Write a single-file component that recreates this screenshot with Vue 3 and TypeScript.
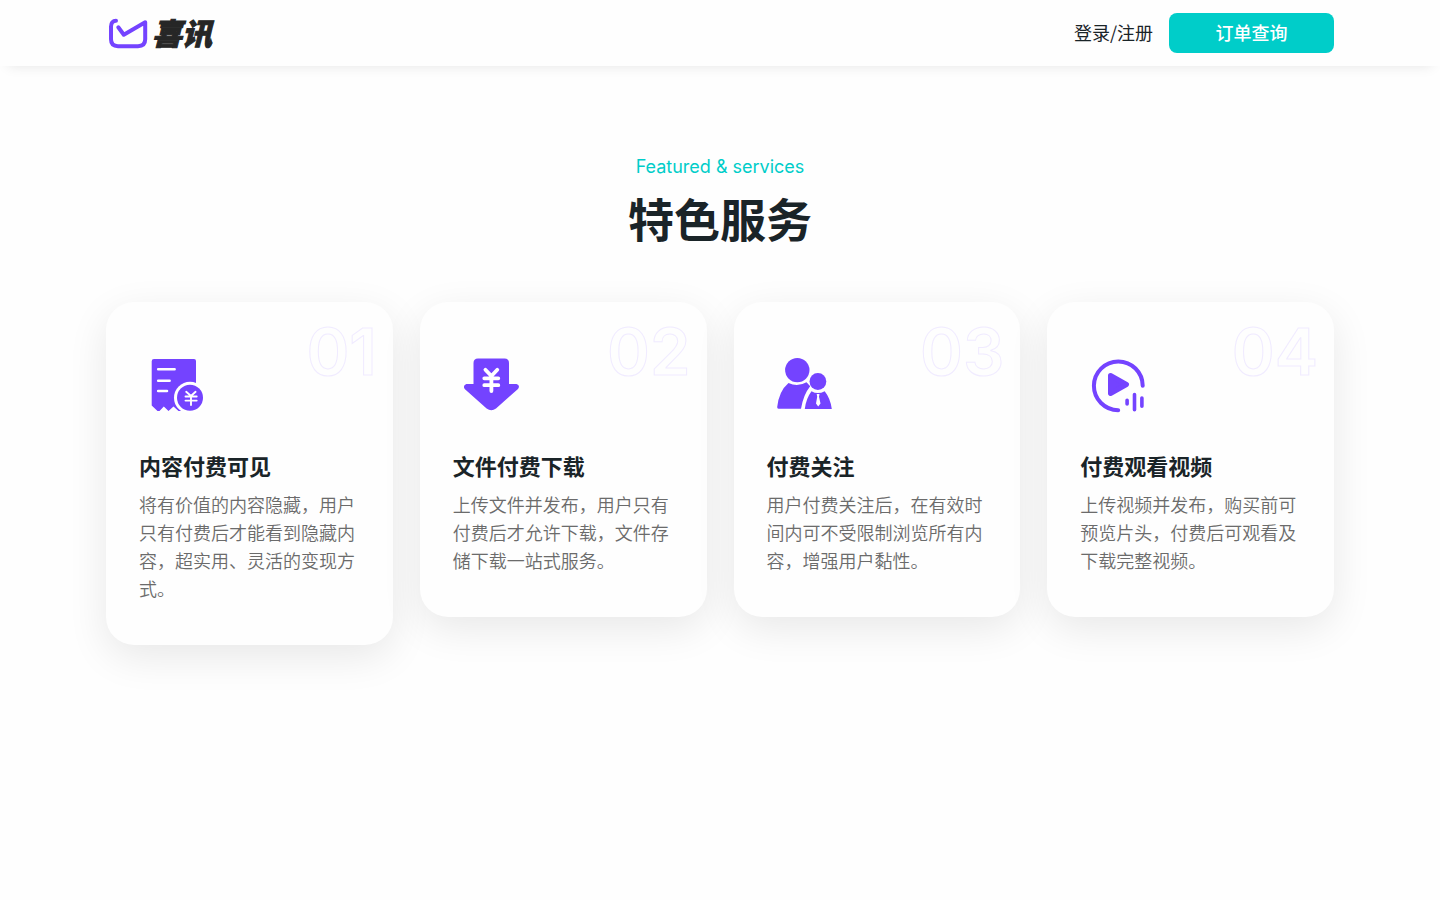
<script setup lang="ts">
interface Service {
  no: string
  icon: 'receipt' | 'download' | 'people' | 'video'
  viewBox: string
  title: string
  text: string
}

const services: Service[] = [
  {
    no: '01',
    icon: 'receipt',
    viewBox: '-1 0 80 80',
    title: '内容付费可见',
    text: '将有价值的内容隐藏，用户只有付费后才能看到隐藏内容，超实用、灵活的变现方式。',
  },
  {
    no: '02',
    icon: 'download',
    viewBox: '3 0 80 80',
    title: '文件付费下载',
    text: '上传文件并发布，用户只有付费后才允许下载，文件存储下载一站式服务。',
  },
  {
    no: '03',
    icon: 'people',
    viewBox: '2 0 80 80',
    title: '付费关注',
    text: '用户付费关注后，在有效时间内可不受限制浏览所有内容，增强用户黏性。',
  },
  {
    no: '04',
    icon: 'video',
    viewBox: '0 0 80 80',
    title: '付费观看视频',
    text: '上传视频并发布，购买前可预览片头，付费后可观看及下载完整视频。',
  },
]
</script>

<template>
  <div class="page">
    <header class="header">
      <a class="logo" href="#">
        <svg class="logo-mark" viewBox="0 0 42 32" aria-hidden="true">
          <path
            d="M10 3.700C6.800 3.700 5 6 5 9.500V22.300Q5 29.200 12 29.200H32Q39.200 29.200 39.200 22.300V5.300L17.800 17.700L12.300 10.300"
            fill="none"
            stroke="#7443ff"
            stroke-width="4"
            stroke-linecap="round"
            stroke-linejoin="round"
          />
        </svg>
        <span class="logo-text">喜讯</span>
      </a>
      <nav class="nav">
        <a class="login" href="#">登录/注册</a>
        <button class="order" type="button">订单查询</button>
      </nav>
    </header>

    <main class="main">
      <p class="eyebrow">Featured &amp; services</p>
      <h1 class="heading">特色服务</h1>

      <div class="cards">
        <article v-for="s in services" :key="s.no" class="card">
          <span class="number">{{ s.no }}</span>
          <svg class="icon" :viewBox="s.viewBox" aria-hidden="true">
            <template v-if="s.icon === 'receipt'">
              <path
                d="M14 14H54Q56 14 56 16V60L51 66H38.500L33.500 61.500L28.500 66L23.800 61.500L19.500 66H17.500L11.700 60.500V16.300Q11.700 14 14 14Z"
                fill="#7443ff"
              />
              <path
                d="M18.200 24.300H34.600M18.200 35.700H29.600M18.200 46H27"
                stroke="#fff"
                stroke-width="2.600"
                stroke-linecap="round"
              />
              <circle cx="50" cy="52.700" r="16" fill="#fff" />
              <circle cx="50" cy="52.700" r="13" fill="#7443ff" />
              <path
                d="M46.200 46.800L51 51L55.600 46.800M51 51V60M45.500 51.500H56.700M45.500 55.600H56.700"
                fill="none"
                stroke="#fff"
                stroke-width="1.900"
                stroke-linecap="round"
              />
            </template>
            <template v-else-if="s.icon === 'download'">
              <path
                d="M28 13.500H54.500Q59 13.500 59 18V39H66.500Q70.500 40.500 68 44L46 63.500Q41.300 67 36.600 63.500L14.700 44Q12.500 40.500 16.300 39H23.500V18Q23.500 13.500 28 13.500Z"
                fill="#7443ff"
              />
              <path
                d="M35.400 24.800L41.400 31L47.300 24.800M41.400 31V46M34.300 33.300H48.300M34.300 40.200H48.300"
                fill="none"
                stroke="#fff"
                stroke-width="3.800"
                stroke-linecap="round"
              />
            </template>
            <template v-else-if="s.icon === 'people'">
              <circle cx="32.300" cy="25.100" r="12.200" fill="#7443ff" />
              <path
                d="M23.500 38Q32.500 42.500 41.500 37.300L45.200 41.300Q38.500 49.500 36 63.700H13.500Q12 63.700 12.200 62Q14 46 23.500 38Z"
                fill="#7443ff"
              />
              <circle cx="52.900" cy="36.500" r="8.400" fill="#7443ff" />
              <path
                d="M46.500 46.200Q52.800 50 59.700 46.200Q65.500 53.500 66.800 64H39.800Q41 53.500 46.500 46.200Z"
                fill="#7443ff"
              />
              <path d="M51.700 49H54.500L54 51.800L55.500 58.500L53.200 61.500L51 58.500L52.200 51.800Z" fill="#fff" />
            </template>
            <template v-else>
              <path
                d="M38.200 65.200A24.400 24.400 0 1 1 62.700 40.700"
                fill="none"
                stroke="#7443ff"
                stroke-width="4"
                stroke-linecap="round"
              />
              <path
                d="M30.500 30.500L46.500 39.500L30.500 48.500Z"
                fill="#7443ff"
                stroke="#7443ff"
                stroke-width="5"
                stroke-linejoin="round"
              />
              <path
                d="M47.100 55.300V59M54.500 49.500V64.800M61.900 53V61.200"
                stroke="#7443ff"
                stroke-width="3.600"
                stroke-linecap="round"
              />
            </template>
          </svg>
          <h2 class="title">{{ s.title }}</h2>
          <p class="text">{{ s.text }}</p>
        </article>
      </div>
    </main>
  </div>
</template>

<style>
body {
  background: #fefefe;
}
</style>

<style scoped>
.page {
  font-family: Inter, 'Noto Sans CJK SC', sans-serif;
  font-size: 18px;
  color: #1a2428;
}

.header {
  display: flex;
  align-items: center;
  justify-content: space-between;
  height: 66px;
  padding: 0 106px;
  background: #fefefe;
  box-shadow: 0 8px 12px -8px rgba(0, 0, 0, 0.1);
}

.logo {
  display: flex;
  align-items: center;
  gap: 4px;
  color: #262626;
  text-decoration: none;
}

.logo-mark {
  width: 42px;
  height: 32px;
}

.logo-text {
  padding-bottom: 2px;
  font-family: 'Noto Sans CJK SC', sans-serif;
  font-size: 30px;
  font-style: italic;
  font-weight: 900;
  line-height: 36px;
  -webkit-text-stroke: 1px #262626;
}

.nav {
  display: flex;
  align-items: center;
  gap: 16px;
}

.login {
  padding-bottom: 2px;
  font-family: 'Noto Sans CJK SC', sans-serif;
  color: #1a2428;
  text-decoration: none;
}

.order {
  width: 165px;
  height: 40px;
  padding: 0 0 2px;
  border: 0;
  border-radius: 8px;
  background: #00cdc9;
  color: #fff;
  font-family: 'Noto Sans CJK SC', sans-serif;
  font-size: 18px;
  font-weight: 500;
}

.main {
  padding: 88px 106px 64px;
}

.eyebrow {
  margin: 0;
  color: #00cdc9;
  line-height: 26px;
  text-align: center;
}

.heading {
  margin: 8px 0 50px;
  font-size: 46px;
  font-weight: 600;
  line-height: 64px;
  text-align: center;
}

.cards {
  display: grid;
  grid-template-columns: repeat(4, 1fr);
  align-items: start;
  gap: 27px;
}

.card {
  position: relative;
  padding: 43px 33px 41px;
  border-radius: 28px;
  background: #fefefe;
  box-shadow: 0 12px 40px rgba(0, 0, 0, 0.09);
}

.number {
  position: absolute;
  top: 14px;
  right: 16px;
  color: transparent;
  font-size: 65px;
  font-weight: 600;
  line-height: 72px;
  -webkit-text-stroke: 1px #f0ebff;
}

.icon {
  display: block;
  width: 80px;
  height: 80px;
}

.title {
  margin: 26px 0 9px;
  font-size: 22px;
  font-weight: 600;
  line-height: 32px;
}

.text {
  margin: 0;
  color: #6b6b6b;
  font-weight: 350;
  line-height: 28px;
}
</style>
